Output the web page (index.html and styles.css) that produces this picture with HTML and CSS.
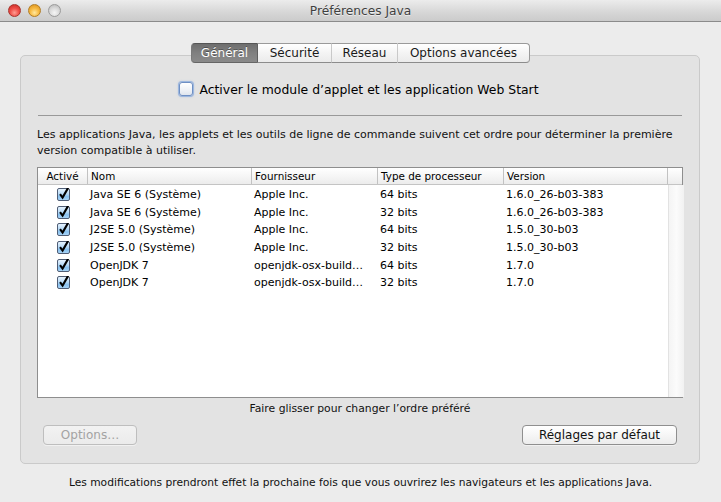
FILE: index.html
```html
<!DOCTYPE html>
<html lang="fr">
<head>
<meta charset="utf-8">
<title>Préférences Java</title>
<link rel="stylesheet" href="styles.css">
</head>
<body>
<div class="window">
  <header class="titlebar">
    <div class="lights">
      <span class="light red"></span>
      <span class="light yellow"></span>
      <span class="light gray"></span>
    </div>
    <div class="title">Préférences Java</div>
    <div></div>
  </header>

  <nav class="tabs">
    <span class="tab tab-general selected">Général</span>
    <span class="tab tab-secu">Sécurité</span>
    <span class="tab tab-reseau">Réseau</span>
    <span class="tab tab-options">Options avancées</span>
  </nav>

  <section class="group">
    <div class="enable-row">
      <span class="cb-empty"></span>
      <span class="enable-label">Activer le module d’applet et les application Web Start</span>
    </div>
    <hr class="sep">
    <p class="desc">Les applications Java, les applets et les outils de ligne de commande suivent cet ordre pour déterminer la première version compatible à utiliser.</p>

    <div class="table">
      <div class="thead">
        <div class="th th-center">Activé</div>
        <div class="th">Nom</div>
        <div class="th">Fournisseur</div>
        <div class="th">Type de processeur</div>
        <div class="th">Version</div>
        <div class="th th-last"></div>
      </div>
      <div class="tbody">
        <div class="rows">
          <div class="tr">
            <div class="td td-center"><span class="cb"><svg viewBox="0 0 12 12"><path d="M2.2 5.6 L5 9.4 L11 -1.2"/></svg></span></div>
            <div class="td">Java SE 6 (Système)</div>
            <div class="td">Apple Inc.</div>
            <div class="td">64 bits</div>
            <div class="td">1.6.0_26-b03-383</div>
          </div>
          <div class="tr">
            <div class="td td-center"><span class="cb"><svg viewBox="0 0 12 12"><path d="M2.2 5.6 L5 9.4 L11 -1.2"/></svg></span></div>
            <div class="td">Java SE 6 (Système)</div>
            <div class="td">Apple Inc.</div>
            <div class="td">32 bits</div>
            <div class="td">1.6.0_26-b03-383</div>
          </div>
          <div class="tr">
            <div class="td td-center"><span class="cb"><svg viewBox="0 0 12 12"><path d="M2.2 5.6 L5 9.4 L11 -1.2"/></svg></span></div>
            <div class="td">J2SE 5.0 (Système)</div>
            <div class="td">Apple Inc.</div>
            <div class="td">64 bits</div>
            <div class="td">1.5.0_30-b03</div>
          </div>
          <div class="tr">
            <div class="td td-center"><span class="cb"><svg viewBox="0 0 12 12"><path d="M2.2 5.6 L5 9.4 L11 -1.2"/></svg></span></div>
            <div class="td">J2SE 5.0 (Système)</div>
            <div class="td">Apple Inc.</div>
            <div class="td">32 bits</div>
            <div class="td">1.5.0_30-b03</div>
          </div>
          <div class="tr">
            <div class="td td-center"><span class="cb"><svg viewBox="0 0 12 12"><path d="M2.2 5.6 L5 9.4 L11 -1.2"/></svg></span></div>
            <div class="td">OpenJDK 7</div>
            <div class="td">openjdk-osx-build…</div>
            <div class="td">64 bits</div>
            <div class="td">1.7.0</div>
          </div>
          <div class="tr">
            <div class="td td-center"><span class="cb"><svg viewBox="0 0 12 12"><path d="M2.2 5.6 L5 9.4 L11 -1.2"/></svg></span></div>
            <div class="td">OpenJDK 7</div>
            <div class="td">openjdk-osx-build…</div>
            <div class="td">32 bits</div>
            <div class="td">1.7.0</div>
          </div>
        </div>
        <div class="vscroll"></div>
      </div>
    </div>

    <p class="hint">Faire glisser pour changer l’ordre préféré</p>

    <div class="buttons">
      <button class="btn btn-options" disabled>Options…</button>
      <button class="btn btn-defaults">Réglages par défaut</button>
    </div>
  </section>

  <p class="footer">Les modifications prendront effet la prochaine fois que vous ouvrirez les navigateurs et les applications Java.</p>
</div>
</body>
</html>
```

FILE: styles.css
```css
html, body {
  margin: 0;
  padding: 0;
}
body {
  width: 721px;
  height: 502px;
  overflow: hidden;
  background: #ececec;
  font-family: "DejaVu Sans", "Lucida Grande", sans-serif;
  color: #000;
}
.window {
  display: flex;
  flex-direction: column;
  height: 502px;
}

/* Title bar */
.titlebar {
  height: 21px;
  border-bottom: 1px solid #8b8b8b;
  background: linear-gradient(#ececec, #d6d6d6 60%, #cbcbcb);
  display: grid;
  grid-template-columns: 1fr auto 1fr;
  align-items: center;
  flex: none;
}
.lights {
  display: flex;
  gap: 7px;
  padding-left: 8px;
}
.light {
  width: 13px;
  height: 13px;
  box-sizing: border-box;
  border-radius: 50%;
}
.red {
  background: radial-gradient(circle at 50% 70%, #ff9d92 0%, #f0504a 45%, #c4261f 100%);
  border: 1px solid #a8332c;
}
.yellow {
  background: radial-gradient(circle at 50% 70%, #ffe8a0 0%, #f7bb43 45%, #d98c14 100%);
  border: 1px solid #b27d24;
}
.gray {
  background: radial-gradient(circle at 50% 70%, #f6f6f6 0%, #d9d9d9 50%, #b3b3b3 100%);
  border: 1px solid #9b9b9b;
}
.title {
  font-size: 12.2px;
  color: #3f3f3f;
  text-shadow: 0 1px 0 rgba(255,255,255,0.6);
  padding-top: 1px;
}

/* Tabs */
.tabs {
  display: flex;
  justify-content: center;
  margin-top: 21px;
  position: relative;
  z-index: 2;
  flex: none;
}
.tab {
  height: 20px;
  box-sizing: border-box;
  display: flex;
  align-items: center;
  justify-content: center;
  font-size: 12px;
  background: linear-gradient(#ffffff, #f3f3f3 55%, #ebebeb);
  border-top: 1px solid #9a9a9a;
  border-bottom: 1px solid #8c8c8c;
  border-left: 1px solid #c9c9c9;
  color: #1a1a1a;
}
.tab-general { width: 66px; border-radius: 4px 0 0 4px; border-left: 1px solid #7a7a7a; }
.tab-secu { width: 74px; border-left: 1px solid #5f5f5f; }
.tab-reseau { width: 66px; }
.tab-options { width: 133px; border-right: 1px solid #9a9a9a; border-radius: 0 4px 4px 0; }
.tab.selected {
  background: linear-gradient(#6e6e6e, #808080 50%, #8a8a8a);
  border-top-color: #555;
  border-bottom-color: #666;
  color: #fff;
  text-shadow: 0 -1px 0 rgba(0,0,0,0.35);
}

/* Group box */
.group {
  margin: -8px 21px 0 20px;
  height: 409px;
  box-sizing: border-box;
  background: #e3e3e3;
  border: 1px solid #cacaca;
  border-radius: 5px;
  padding: 25px 16px 0 16px;
  display: flex;
  flex-direction: column;
  flex: none;
}
.enable-row {
  height: 16px;
  display: flex;
  align-items: center;
  justify-content: center;
  gap: 6px;
  font-size: 12.4px;
  margin-left: -2px;
}
.cb-empty {
  width: 14px;
  height: 14px;
  box-sizing: border-box;
  border: 1px solid #6e8fc4;
  border-radius: 3px;
  background: linear-gradient(#ffffff, #eef1f6 60%, #dfe5ee);
  box-shadow: 0 0 0 1px rgba(120,160,220,0.55), 0 0 2px 1px rgba(120,160,220,0.35);
}
.sep {
  margin: 18px 1px 0 1px;
  height: 0;
  border: none;
  border-top: 1px solid #999;
}
.desc {
  margin: 11px 0 0 0;
  font-size: 11px;
  line-height: 16px;
  color: #111;
}

/* Table */
.table {
  margin-top: 8px;
  height: 231px;
  box-sizing: border-box;
  border: 1px solid #8e8e8e;
  background: #fff;
  display: flex;
  flex-direction: column;
}
.thead, .tr {
  display: grid;
  grid-template-columns: 49px 164px 126px 126px 165px;
}
.thead {
  grid-template-columns: 49px 164px 126px 126px 164px 16px;
  height: 16px;
  border-bottom: 1px solid #c4c4c4;
  background: linear-gradient(#ffffff, #f6f6f6 50%, #ececec);
  flex: none;
}
.th {
  font-size: 10.4px;
  line-height: 16px;
  padding-left: 3px;
  border-left: 1px solid #c2c2c2;
  box-sizing: border-box;
  white-space: nowrap;
}
.thead .th:first-child {
  border-left: none;
  padding-left: 0;
  text-align: center;
}
.tbody {
  flex: 1;
  display: flex;
}
.rows {
  flex: 1;
  padding-top: 1px;
}
.tr {
  height: 17.6px;
  align-items: center;
}
.td {
  font-size: 11px;
  padding-left: 3px;
  white-space: nowrap;
  overflow: hidden;
}
.td-center {
  display: flex;
  justify-content: center;
  padding-left: 0;
}
.cb {
  width: 13px;
  height: 13px;
  box-sizing: border-box;
  border: 1px solid #4f5d75;
  border-radius: 2px;
  background: linear-gradient(#e6f3fe, #b7daf7 45%, #88c1ef 70%, #a7d3f6);
  display: flex;
  margin-left: 2px;
}
.cb svg {
  width: 11px;
  height: 11px;
  overflow: visible;
}
.cb path {
  fill: none;
  stroke: #000;
  stroke-width: 2.3;
  stroke-linejoin: miter;
}
.vscroll {
  width: 15px;
  flex: none;
  border-left: 1px solid #e2e2e2;
  background: linear-gradient(90deg, #f4f4f4, #fbfbfb 50%, #f1f1f1);
}

.hint {
  margin: 4px 0 0 0;
  text-align: center;
  font-size: 10.8px;
  line-height: 14px;
  color: #111;
}

/* Buttons */
.buttons {
  display: flex;
  justify-content: space-between;
  margin: 9px 6px 0 6px;
}
.btn {
  height: 20px;
  box-sizing: border-box;
  border-radius: 4px;
  font-family: "DejaVu Sans", sans-serif;
  font-size: 12px;
  padding: 0;
  border: 1px solid #8f8f8f;
  background: linear-gradient(#ffffff, #f6f6f6 50%, #ececec);
  color: #111;
  box-shadow: 0 1px 0 rgba(255,255,255,0.5);
}
.btn-options {
  width: 94px;
  color: #a3a3a3;
  border-color: #bebebe;
  background: linear-gradient(#f2f2f2, #ebebeb);
}
.btn-defaults {
  width: 155px;
}

.footer {
  margin: 11px 0 0 0;
  text-align: center;
  font-size: 10.7px;
  line-height: 16px;
  color: #111;
}
```
